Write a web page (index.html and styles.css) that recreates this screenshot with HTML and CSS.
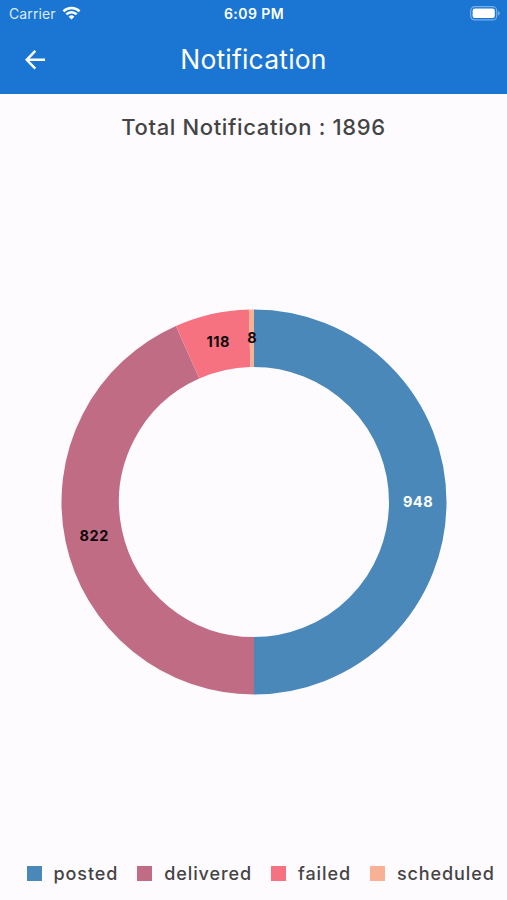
FILE: index.html
```html
<!DOCTYPE html>
<html lang="en">
<head>
    <meta charset="UTF-8">
    <meta name="viewport" content="width=device-width, initial-scale=1.0">
    <title>Notification</title>
    <link rel="stylesheet" href="styles.css">
</head>
<body>
    <header class="app-header">
        <div class="status-bar">
            <div class="carrier">
                <span>Carrier</span>
                <svg class="wifi" width="19" height="14" viewBox="0 0 20 14" fill="none" stroke="#fff" stroke-width="2.7">
                    <path d="M1.5 5.2a12 12 0 0 1 17 0"/>
                    <path d="M4.6 8.4a7.6 7.6 0 0 1 10.8 0"/>
                    <path d="M10 13.9 7 10.9a4.3 4.3 0 0 1 6 0z" fill="#fff" stroke="none"/>
                </svg>
            </div>
            <span class="time">6:09 PM</span>
            <svg class="battery" width="31" height="15" viewBox="0 0 31 15">
                <rect x="0.7" y="0.7" width="26" height="13.2" rx="4" fill="none" stroke="#fff" stroke-opacity="0.42" stroke-width="1.2"/>
                <rect x="2.6" y="2.6" width="22.2" height="9.4" rx="2.2" fill="#fff"/>
                <path d="M28.2 5v4.6a2.5 2.5 0 0 0 0-4.6z" fill="#fff" fill-opacity="0.5"/>
            </svg>
        </div>
        <div class="title-bar">
            <svg class="back" width="20" height="20" viewBox="0 0 20 20" fill="none" stroke="#fff" stroke-width="2.4">
                <path d="M10.3 0.9 1.7 9.8l8.6 8.9M1.9 9.8h18.1"/>
            </svg>
            <h1>Notification</h1>
        </div>
    </header>

    <main class="content">
        <h2>Total Notification : 1896</h2>

        <svg class="chart" width="386" height="386" viewBox="0 0 386 386">
            <path class="arc posted" d="M193 29.25A163.75 163.75 0 0 1 193 356.75"/>
            <path class="arc delivered" d="M193 356.75A163.75 163.75 0 0 1 126.6 43.31"/>
            <path class="arc failed" d="M126.6 43.31A163.75 163.75 0 0 1 188.66 29.31"/>
            <path class="arc scheduled" d="M188.66 29.31A163.75 163.75 0 0 1 193 29.25"/>
            <text class="value light" x="357" y="197.8">948</text>
            <text class="value" x="33.2" y="231.6">822</text>
            <text class="value" x="157.2" y="38.2">118</text>
            <text class="value" x="191.2" y="34.2">8</text>
        </svg>

        <ul class="legend">
            <li><span class="swatch posted"></span>posted</li>
            <li><span class="swatch delivered"></span>delivered</li>
            <li><span class="swatch failed"></span>failed</li>
            <li><span class="swatch scheduled"></span>scheduled</li>
        </ul>
    </main>
</body>
</html>
```
FILE: styles.css
```css
* {
    box-sizing: border-box;
}

body {
    margin: 0;
    height: 900px;
    display: flex;
    flex-direction: column;
    background-color: #fefbff;
    color: #444;
    font-family: Inter, 'Liberation Sans', sans-serif;
    overflow: hidden;
}

/* Header */
.app-header {
    height: 94px;
    background-color: #1b75d2;
    color: #fff;
}

.status-bar {
    display: grid;
    grid-template-columns: 1fr auto 1fr;
    align-items: center;
    height: 27px;
    padding: 0 6px 0 9px;
    font-size: 14px;
}

.carrier {
    display: flex;
    align-items: center;
    gap: 6px;
    color: #dcebfa;
    letter-spacing: 0.1px;
}

.wifi {
    margin-top: -2px;
}

.time {
    margin-left: -2px;
    font-size: 14px;
    font-weight: 600;
    letter-spacing: 0.45px;
}

.battery {
    justify-self: end;
}

.title-bar {
    display: grid;
    grid-template-columns: 1fr auto 1fr;
    align-items: center;
    height: 66px;
    padding: 0 25px;
}

h1 {
    margin: -2px 0 0;
    font-size: 26.5px;
    font-weight: 400;
    letter-spacing: 0.2px;
}

/* Chart */
.content {
    flex: 1;
    display: flex;
    flex-direction: column;
    align-items: center;
}

h2 {
    margin: 19px 0 0;
    font-size: 22px;
    line-height: 28px;
    font-weight: 550;
    letter-spacing: 0.65px;
    white-space: nowrap;
}

.chart {
    margin-top: 167.5px;
    margin-left: 1px;
}

.arc {
    fill: none;
    stroke-width: 57.5;
}

.arc.posted {
    stroke: #4a88b9;
}

.arc.delivered {
    stroke: #c06c84;
}

.arc.failed {
    stroke: #f67280;
}

.arc.scheduled {
    stroke: #f8b195;
}

.value {
    fill: #100a0c;
    font-size: 14.5px;
    font-weight: 700;
    letter-spacing: 0.5px;
    text-anchor: middle;
}

.value.light {
    fill: #fff;
}

/* Legend */
.legend {
    display: flex;
    align-self: flex-start;
    gap: 19px;
    margin: auto 0 14.5px;
    padding: 0 0 0 26.5px;
    list-style: none;
    font-size: 18px;
    line-height: 24px;
    font-weight: 550;
    letter-spacing: 0.9px;
    white-space: nowrap;
}

.legend li {
    display: flex;
    align-items: center;
    gap: 12px;
}

.swatch {
    width: 15px;
    height: 15px;
}

.swatch.posted {
    background-color: #4a88b9;
}

.swatch.delivered {
    background-color: #c06c84;
}

.swatch.failed {
    background-color: #f67280;
}

.swatch.scheduled {
    background-color: #f8b195;
}
```
